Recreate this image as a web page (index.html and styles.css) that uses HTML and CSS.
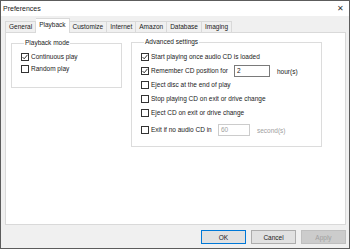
FILE: index.html
```html
<!DOCTYPE html>
<html>
<head>
    <meta charset="UTF-8">
    <title>Preferences</title>
    <link rel="stylesheet" href="styles.css">
</head>
<body>
    <div class="window">
        <div class="titlebar">
            <span class="title">Preferences</span>
            <span class="close">&#x2715;</span>
        </div>
        <div class="content">
            <div class="tabs">
                <div class="tab">General</div>
                <div class="tab selected">Playback</div>
                <div class="tab">Customize</div>
                <div class="tab">Internet</div>
                <div class="tab">Amazon</div>
                <div class="tab">Database</div>
                <div class="tab">Imaging</div>
            </div>
            <div class="panel">
                <fieldset class="group group-mode">
                    <legend>Playback mode</legend>
                    <div class="row">
                        <span class="box checked"><svg width="6" height="6" viewBox="0 0 6 6"><polyline points="0.5,3 2.2,4.8 5.5,0.8" fill="none" stroke="#222" stroke-width="0.9"/></svg></span>
                        <span class="label">Continuous play</span>
                    </div>
                    <div class="row">
                        <span class="box"></span>
                        <span class="label">Random play</span>
                    </div>
                </fieldset>
                <fieldset class="group group-adv">
                    <legend>Advanced settings</legend>
                    <div class="row">
                        <span class="box checked"><svg width="6" height="6" viewBox="0 0 6 6"><polyline points="0.5,3 2.2,4.8 5.5,0.8" fill="none" stroke="#222" stroke-width="0.9"/></svg></span>
                        <span class="label">Start playing once audio CD is loaded</span>
                    </div>
                    <div class="row">
                        <span class="box checked"><svg width="6" height="6" viewBox="0 0 6 6"><polyline points="0.5,3 2.2,4.8 5.5,0.8" fill="none" stroke="#222" stroke-width="0.9"/></svg></span>
                        <span class="label fixed-remember">Remember CD position for</span>
                        <span class="field field-hours">2</span>
                        <span class="unit">hour(s)</span>
                    </div>
                    <div class="row">
                        <span class="box"></span>
                        <span class="label">Eject disc at the end of play</span>
                    </div>
                    <div class="row">
                        <span class="box"></span>
                        <span class="label">Stop playing CD on exit or drive change</span>
                    </div>
                    <div class="row">
                        <span class="box"></span>
                        <span class="label">Eject CD on exit or drive change</span>
                    </div>
                    <div class="row row-last">
                        <span class="box"></span>
                        <span class="label fixed-exit">Exit if no audio CD in</span>
                        <span class="field field-secs disabled">60</span>
                        <span class="unit disabled-text">second(s)</span>
                    </div>
                </fieldset>
            </div>
            <div class="buttons">
                <button class="btn default">OK</button>
                <button class="btn">Cancel</button>
                <button class="btn disabled">Apply</button>
            </div>
        </div>
    </div>
</body>
</html>
```

FILE: styles.css
```css
body {
    margin: 0;
    background: #ffffff;
    font-family: "Liberation Sans", Arial, sans-serif;
    font-size: 6.5px;
    color: #1a1a1a;
}

.window {
    width: 350px;
    height: 249px;
    box-sizing: border-box;
    border: 1px solid #5c5c5c;
    display: flex;
    flex-direction: column;
    background: #f0f0f0;
}

.titlebar {
    height: 15px;
    background: #fff;
    display: flex;
    align-items: center;
    justify-content: space-between;
    padding: 0 5px 0 2px;
}

.title {
    font-size: 7px;
}

.close {
    font-size: 8px;
    color: #333;
}

.content {
    flex: 1;
    display: flex;
    flex-direction: column;
    padding: 3px 3px 3px 4px;
}

.tabs {
    display: flex;
    align-items: flex-end;
    height: 13px;
}

.tab {
    height: 10px;
    line-height: 10px;
    padding: 0 3px;
    border: 1px solid #d9d9d9;
    border-bottom: none;
    border-left: none;
    background: #f0f0f0;
    white-space: nowrap;
}

.tab:first-child {
    border-left: 1px solid #d9d9d9;
}

.tab.selected {
    height: 14px;
    line-height: 12px;
    margin-bottom: -1px;
    background: #fff;
    position: relative;
    z-index: 1;
}

.panel {
    height: 193px;
    background: #fff;
    border: 1px solid #d9d9d9;
    display: flex;
    align-items: flex-start;
    gap: 9px;
    padding: 6px 0 0 5px;
    box-sizing: border-box;
}

.group {
    margin: 0;
    border: 1px solid #dcdcdc;
    padding: 4px 0 12px 9px;
    box-sizing: border-box;
}

.group legend {
    padding: 0 1px;
    margin-left: 3px;
    line-height: 8px;
}

.group-mode {
    width: 111px;
}

.group-adv {
    width: 191px;
    margin-top: -1px;
    padding-bottom: 9px;
}

.row {
    display: flex;
    align-items: center;
    height: 12px;
    white-space: nowrap;
}

.group-adv .row {
    height: 14px;
}

.group-adv .row-last {
    margin-top: 3px;
}

.box {
    width: 6px;
    height: 6px;
    border: 1px solid #333;
    background: #fff;
    display: flex;
    align-items: center;
    justify-content: center;
    margin-right: 2px;
    flex-shrink: 0;
}

.label {
    line-height: 8px;
}

.fixed-remember {
    width: 83px;
}

.fixed-exit {
    width: 67px;
}

.field {
    box-sizing: border-box;
    height: 12px;
    line-height: 10px;
    border: 1px solid #7a7a7a;
    padding: 0 2px;
    background: #fff;
}

.field-hours {
    width: 36px;
}

.field-secs {
    width: 32px;
}

.field.disabled {
    border-color: #cccccc;
    color: #a0a0a0;
}

.unit {
    margin-left: 7px;
}

.disabled-text {
    color: #a0a0a0;
}

.buttons {
    display: flex;
    justify-content: flex-end;
    gap: 5px;
    margin-top: 5px;
}

.btn {
    width: 45px;
    height: 14px;
    padding: 0;
    font-family: "Liberation Sans", Arial, sans-serif;
    font-size: 6.5px;
    background: #e1e1e1;
    border: 1px solid #adadad;
    color: #1a1a1a;
}

.btn.default {
    border-color: #0078d7;
}

.btn.disabled {
    background: #cccccc;
    border-color: #bfbfbf;
    color: #a0a0a0;
}
```
